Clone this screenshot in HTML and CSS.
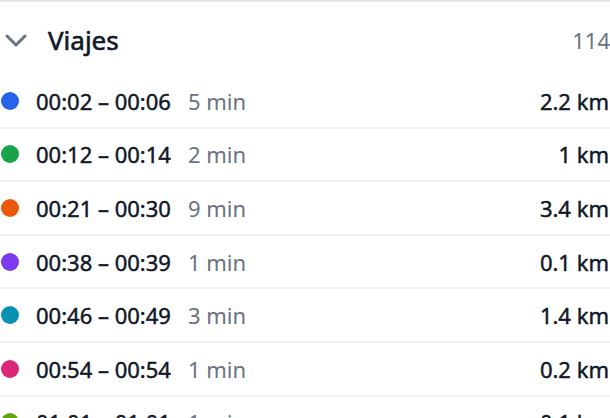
FILE: index.html
```html
<!DOCTYPE html>
<html lang="es">
<head>
<meta charset="utf-8">
<link rel="stylesheet" href="styles.css">
</head>
<body>
<section class="panel">
  <header class="panel-head">
    <svg class="chev" width="22" height="14" viewBox="0 0 22 14"><path d="M2 2 L11 11 L20 2" fill="none" stroke="#6b7280" stroke-width="3" stroke-linecap="round" stroke-linejoin="round"/></svg>
    <h2 class="title">Viajes</h2>
    <span class="count">114</span>
  </header>
  <ul class="trips">
    <li class="trip"><span class="dot c-blue"></span><span class="time">00:02 – 00:06</span><span class="dur">5 min</span><span class="dist">2.2 km</span></li>
    <li class="trip"><span class="dot c-green"></span><span class="time">00:12 – 00:14</span><span class="dur">2 min</span><span class="dist">1 km</span></li>
    <li class="trip"><span class="dot c-orange"></span><span class="time">00:21 – 00:30</span><span class="dur">9 min</span><span class="dist">3.4 km</span></li>
    <li class="trip"><span class="dot c-purple"></span><span class="time">00:38 – 00:39</span><span class="dur">1 min</span><span class="dist">0.1 km</span></li>
    <li class="trip"><span class="dot c-cyan"></span><span class="time">00:46 – 00:49</span><span class="dur">3 min</span><span class="dist">1.4 km</span></li>
    <li class="trip"><span class="dot c-pink"></span><span class="time">00:54 – 00:54</span><span class="dur">1 min</span><span class="dist">0.2 km</span></li>
    <li class="trip"><span class="dot c-lime"></span><span class="time">01:01 – 01:01</span><span class="dur">1 min</span><span class="dist">0.1 km</span></li>
  </ul>
</section>
</body>
</html>
```
FILE: styles.css
```css
html, body {
  margin: 0;
  padding: 0;
  background: #ffffff;
}
body {
  font-family: "Noto Sans", "Open Sans", sans-serif;
  color: #111827;
  overflow: hidden;
}
.panel {
  border-top: 2px solid #e5e7eb;
}
.panel-head {
  display: flex;
  align-items: center;
  height: 73px;
  padding-left: 5px;
}
.chev {
  display: block;
  margin-right: 21px;
  margin-top: 4px;
}
.title {
  margin: 0;
  font-size: 26px;
  font-weight: 400;
  -webkit-text-stroke: 0.6px #111827;
  flex: 1;
  line-height: 1;
  padding-top: 3px;
}
.count {
  font-size: 22px;
  color: #6b7280;
  line-height: 1;
  padding-top: 3px;
}
.trips {
  list-style: none;
  margin: 0;
  padding: 0;
}
.trip {
  display: flex;
  align-items: center;
  height: 51.6px;
  border-bottom: 2px solid #f0f1f3;
}
.dot {
  width: 18px;
  height: 18px;
  border-radius: 50%;
  margin-left: 1px;
  margin-right: 17px;
  flex: none;
}
.time {
  font-size: 22px;
  font-weight: 400;
  -webkit-text-stroke: 0.45px #111827;
  margin-right: 17px;
}
.dur {
  font-size: 22px;
  color: #6b7280;
  flex: 1;
}
.dist {
  font-size: 22px;
  font-weight: 400;
  -webkit-text-stroke: 0.45px #111827;
  margin-right: 1px;
}
.c-blue { background: #2563eb; }
.c-green { background: #16a34a; }
.c-orange { background: #ea580c; }
.c-purple { background: #7c3aed; }
.c-cyan { background: #0891b2; }
.c-pink { background: #db2777; }
.c-lime { background: #65a30d; }
```
